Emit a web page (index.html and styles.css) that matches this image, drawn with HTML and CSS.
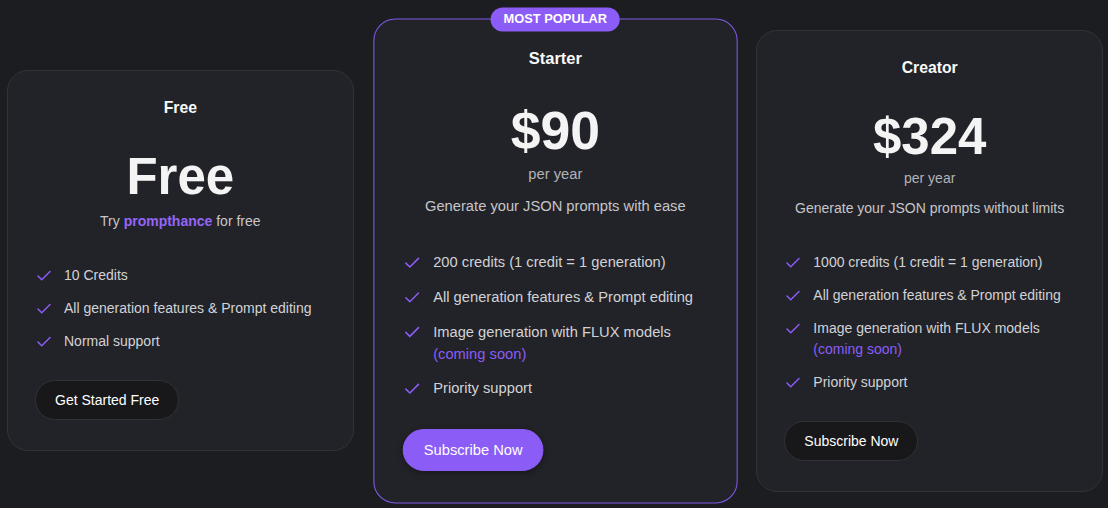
FILE: index.html
```html
<!DOCTYPE html>
<html lang="en">
<head>
<meta charset="utf-8">
<title>Pricing</title>
<link rel="stylesheet" href="styles.css">
</head>
<body>
<main class="plans">
  <section class="card">
    <h3 class="plan-name">Free</h3>
    <div class="price">Free</div>
    <p class="desc">Try <span class="brand">prompthance</span> for free</p>
    <ul class="features">
      <li><svg class="check" viewBox="0 0 24 24"><polyline points="20 6 9 17 4 12"/></svg><span>10 Credits</span></li>
      <li><svg class="check" viewBox="0 0 24 24"><polyline points="20 6 9 17 4 12"/></svg><span>All generation features &amp; Prompt editing</span></li>
      <li><svg class="check" viewBox="0 0 24 24"><polyline points="20 6 9 17 4 12"/></svg><span>Normal support</span></li>
    </ul>
    <div class="actions"><button class="btn">Get Started Free</button></div>
  </section>

  <section class="card featured">
    <div class="badge">MOST POPULAR</div>
    <h3 class="plan-name">Starter</h3>
    <div class="price">$90</div>
    <p class="period">per year</p>
    <p class="desc">Generate your JSON prompts with ease</p>
    <ul class="features">
      <li><svg class="check" viewBox="0 0 24 24"><polyline points="20 6 9 17 4 12"/></svg><span>200 credits (1 credit = 1 generation)</span></li>
      <li><svg class="check" viewBox="0 0 24 24"><polyline points="20 6 9 17 4 12"/></svg><span>All generation features &amp; Prompt editing</span></li>
      <li><svg class="check" viewBox="0 0 24 24"><polyline points="20 6 9 17 4 12"/></svg><span>Image generation with FLUX models <span class="soon">(coming soon)</span></span></li>
      <li><svg class="check" viewBox="0 0 24 24"><polyline points="20 6 9 17 4 12"/></svg><span>Priority support</span></li>
    </ul>
    <div class="actions"><button class="btn btn-primary">Subscribe Now</button></div>
  </section>

  <section class="card">
    <h3 class="plan-name">Creator</h3>
    <div class="price">$324</div>
    <p class="period">per year</p>
    <p class="desc">Generate your JSON prompts without limits</p>
    <ul class="features">
      <li><svg class="check" viewBox="0 0 24 24"><polyline points="20 6 9 17 4 12"/></svg><span>1000 credits (1 credit = 1 generation)</span></li>
      <li><svg class="check" viewBox="0 0 24 24"><polyline points="20 6 9 17 4 12"/></svg><span>All generation features &amp; Prompt editing</span></li>
      <li><svg class="check" viewBox="0 0 24 24"><polyline points="20 6 9 17 4 12"/></svg><span>Image generation with FLUX models <span class="soon">(coming soon)</span></span></li>
      <li><svg class="check" viewBox="0 0 24 24"><polyline points="20 6 9 17 4 12"/></svg><span>Priority support</span></li>
    </ul>
    <div class="actions"><button class="btn">Subscribe Now</button></div>
  </section>
</main>
</body>
</html>
```

FILE: styles.css
```css
* { box-sizing: border-box; }

html, body {
  margin: 0;
  padding: 0;
  background: #1c1d21;
  font-family: "Liberation Sans", Arial, sans-serif;
  color: #f4f4f5;
}

.plans {
  height: 508px;
  display: grid;
  grid-template-columns: repeat(3, 1fr);
  gap: 28px;
  padding: 13px 5px 0 7px;
  align-items: center;
}

.card {
  position: relative;
  background: #222328;
  border: 1px solid #323338;
  border-radius: 21px;
  padding: 29px 27px 30px;
  text-align: center;
}

.featured {
  border-color: #7f5be8;
  transform: scale(1.05);
  z-index: 1;
}

.badge {
  position: absolute;
  top: 0;
  left: 50%;
  transform: translate(-50%, -50%);
  background: #8b5cf6;
  color: #ffffff;
  font-weight: 700;
  font-size: 12.25px;
  line-height: 15px;
  padding: 4px 12px;
  border-radius: 999px;
  white-space: nowrap;
}

.plan-name {
  margin: 0;
  font-size: 15.75px;
  line-height: 16px;
  font-weight: 700;
  color: #f8f8f8;
}

.price {
  margin-top: 35px;
  font-size: 51px;
  line-height: 51px;
  font-weight: 700;
  color: #f4f4f4;
}

.period {
  margin: 6px 0 0;
  font-size: 14px;
  line-height: 21px;
  color: #b2b2b6;
}

.desc {
  margin: 9px 0 0;
  font-size: 14px;
  line-height: 21px;
  color: #c6c6ca;
}

.brand {
  color: #9466f7;
  font-weight: 700;
}

.features {
  list-style: none;
  margin: 33px 0 0;
  padding: 0;
  display: flex;
  flex-direction: column;
  gap: 12px;
  text-align: left;
}

.features li {
  display: flex;
  align-items: flex-start;
  gap: 11px;
  font-size: 14px;
  line-height: 21px;
  color: #d2d2d6;
}

.check {
  flex: none;
  width: 18px;
  height: 18px;
  margin-top: 2px;
  fill: none;
  stroke: #8b5cf6;
  stroke-width: 2;
  stroke-linecap: round;
  stroke-linejoin: round;
}

.soon {
  color: #8b5cf6;
}

.actions {
  margin-top: 28px;
  display: flex;
}

.btn {
  font-family: inherit;
  font-size: 14px;
  line-height: 20px;
  padding: 9px 19px;
  border-radius: 999px;
  border: 1px solid #303136;
  background: #18181b;
  color: #ffffff;
  cursor: pointer;
}

.btn-primary {
  background: #8b5cf6;
  border-color: #8b5cf6;
  box-shadow: 0 2px 6px rgba(0, 0, 0, 0.35);
}
```
